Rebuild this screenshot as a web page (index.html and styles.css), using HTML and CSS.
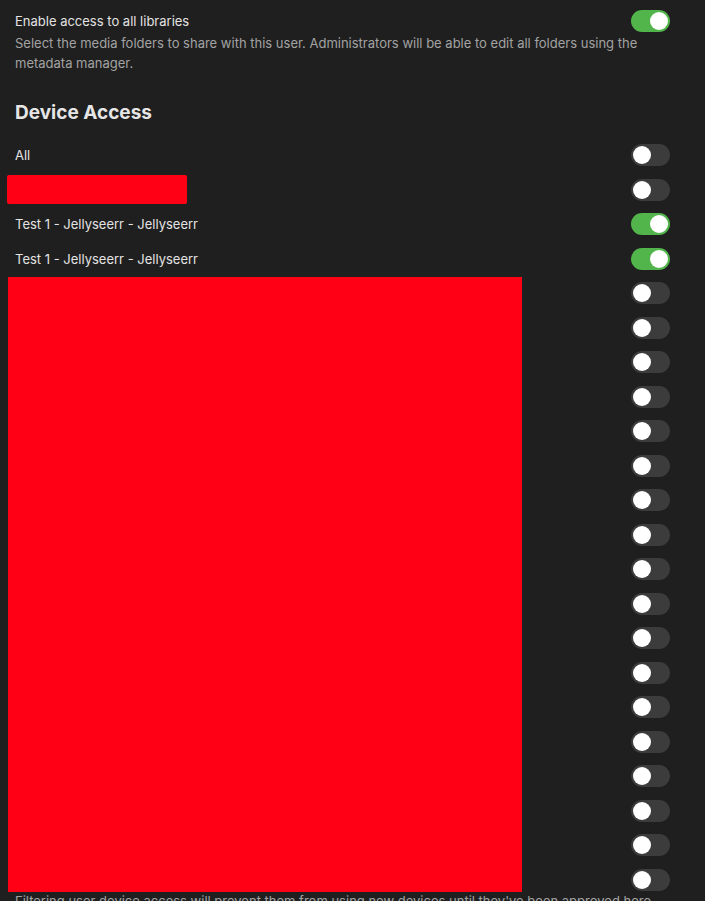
FILE: index.html
```html
<!DOCTYPE html>
<html>
<head>
<meta charset="utf-8">
<link rel="stylesheet" href="styles.css">
</head>
<body>
<div class="page">
  <div class="row top">
    <span class="label">Enable access to all libraries</span>
    <span class="toggle on"></span>
  </div>
  <div class="desc">Select the media folders to share with this user. Administrators will be able to edit all folders using the metadata manager.</div>
  <h2 class="heading">Device Access</h2>
  <div class="list">
    <div class="row"><span class="label">All</span><span class="toggle"></span></div>
    <div class="row"><span class="label"></span><span class="toggle"></span><span class="redact small"></span></div>
    <div class="row"><span class="label">Test 1 - Jellyseerr - Jellyseerr</span><span class="toggle on"></span></div>
    <div class="row"><span class="label">Test 1 - Jellyseerr - Jellyseerr</span><span class="toggle on"></span></div>
    <div class="group">
      <span class="redact big"></span>
      <div class="row"><span class="label"></span><span class="toggle"></span></div>
      <div class="row"><span class="label"></span><span class="toggle"></span></div>
      <div class="row"><span class="label"></span><span class="toggle"></span></div>
      <div class="row"><span class="label"></span><span class="toggle"></span></div>
      <div class="row"><span class="label"></span><span class="toggle"></span></div>
      <div class="row"><span class="label"></span><span class="toggle"></span></div>
      <div class="row"><span class="label"></span><span class="toggle"></span></div>
      <div class="row"><span class="label"></span><span class="toggle"></span></div>
      <div class="row"><span class="label"></span><span class="toggle"></span></div>
      <div class="row"><span class="label"></span><span class="toggle"></span></div>
      <div class="row"><span class="label"></span><span class="toggle"></span></div>
      <div class="row"><span class="label"></span><span class="toggle"></span></div>
      <div class="row"><span class="label"></span><span class="toggle"></span></div>
      <div class="row"><span class="label"></span><span class="toggle"></span></div>
      <div class="row"><span class="label"></span><span class="toggle"></span></div>
      <div class="row"><span class="label"></span><span class="toggle"></span></div>
      <div class="row"><span class="label"></span><span class="toggle"></span></div>
      <div class="row"><span class="label"></span><span class="toggle"></span></div>
    </div>
  </div>
  <div class="desc foot">Filtering user device access will prevent them from using new devices until they've been approved here.</div>
</div>
</body>
</html>
```

FILE: styles.css
```css
html, body {
  margin: 0;
  padding: 0;
  background: #1f1f1f;
}
body {
  font-family: Inter, "Noto Sans", sans-serif;
  color: #e3e3e3;
  overflow: hidden;
  height: 901px;
}
.page {
  padding: 9px 35px 0 15px;
}
.row {
  position: relative;
  display: flex;
  align-items: center;
  justify-content: space-between;
  height: 34.5px;
}
.row.top {
  height: 24px;
}
.label {
  font-size: 13px;
  color: #e3e3e3;
}
.desc {
  font-size: 13px;
  line-height: 20px;
  color: #a3a3a3;
  margin-top: 0;
}
.heading {
  font-size: 19px;
  font-weight: 700;
  color: #e6e6e6;
  margin: 28px 0 13px 0;
  line-height: 24px;
}
.toggle {
  position: relative;
  width: 39px;
  height: 22px;
  border-radius: 11px;
  background: #3c3c3c;
  flex: none;
}
.toggle::after {
  content: "";
  position: absolute;
  top: 2px;
  left: 2px;
  width: 18px;
  height: 18px;
  border-radius: 50%;
  background: #ffffff;
}
.toggle.on {
  background: #52b54b;
}
.toggle.on::after {
  left: auto;
  right: 2px;
}
.group {
  position: relative;
}
.redact {
  position: absolute;
  background: #ff0015;
}
.redact.small {
  left: -8px;
  top: 2px;
  width: 180px;
  height: 29px;
  border-radius: 2px;
}
.redact.big {
  left: -7px;
  top: 1px;
  width: 514px;
  height: 615px;
  z-index: 1;
}
.foot {
  margin-top: -6px;
}
```
